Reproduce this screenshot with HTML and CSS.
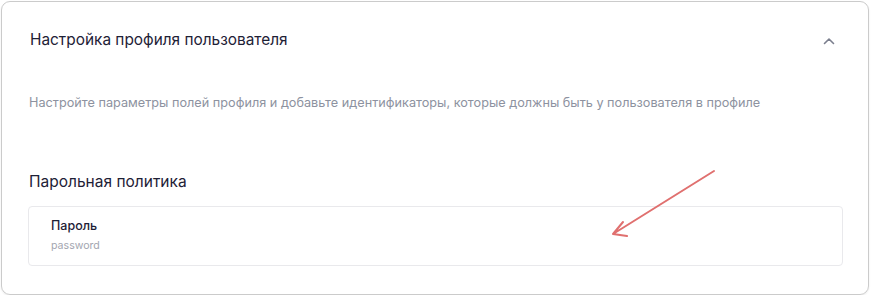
FILE: index.html
```html
<!DOCTYPE html>
<html lang="ru">
<head>
<meta charset="utf-8">
<link rel="stylesheet" href="styles.css">
</head>
<body>
<div class="card">
  <div class="card-header">
    <h2 class="card-title">Настройка профиля пользователя</h2>
    <svg class="chevron" width="12" height="8" viewBox="0 0 12 8"><path d="M1.5 6.5 L6 2 L10.5 6.5" fill="none" stroke="#7b7f8e" stroke-width="1.6" stroke-linecap="round" stroke-linejoin="round"/></svg>
  </div>
  <p class="card-desc">Настройте параметры полей профиля и добавьте идентификаторы, которые должны быть у пользователя в профиле</p>
  <h3 class="section-title">Парольная политика</h3>
  <div class="field-box">
    <div class="field-name">Пароль</div>
    <div class="field-key">password</div>
  </div>
  <svg class="arrow" width="871" height="296" viewBox="0 0 871 296"><path d="M714 171 L613 234 M613 234 L623 222 M613 234 L627 236" fill="none" stroke="#e0706f" stroke-width="2" stroke-linecap="round" stroke-linejoin="round"/></svg>
</div>
</body>
</html>
```
FILE: styles.css
```css
html, body { margin: 0; padding: 0; background: #ffffff; }
body { font-family: Inter, "Noto Sans", sans-serif; }
.card {
  box-sizing: border-box;
  margin: 1px 0 0 1px;
  width: 868px;
  height: 294px;
  border: 1px solid #cbcbcb;
  border-radius: 9px;
  padding: 0 25px 0 26px;
  box-shadow: 0 1px 2px rgba(0,0,0,0.08);
}
.card-header {
  display: flex;
  align-items: center;
  justify-content: space-between;
  height: 74px;
  padding-left: 2px;
}
.card-title {
  margin: 0;
  font-size: 15.4px;
  font-weight: 400;
  color: #1e2136;
}
.chevron { margin-right: 8px; margin-top: 3px; }
.card-desc {
  margin: 18px 0 0 1px;
  font-size: 12.7px;
  line-height: 18px;
  color: #8d92a0;
}
.section-title {
  margin: 60px 0 0 1px;
  font-size: 15.5px;
  line-height: 20px;
  font-weight: 400;
  color: #1e2136;
}
.field-box {
  margin-top: 14px;
  height: 60px;
  box-sizing: border-box;
  border: 1px solid #e9e9ec;
  border-radius: 4px;
  padding: 10px 22px;
}
.field-name {
  font-size: 12.5px;
  line-height: 17px;
  font-weight: 500;
  color: #1e2136;
}
.field-key {
  margin-top: 5px;
  font-size: 10.6px;
  line-height: 14px;
  color: #a3a6b0;
}
.arrow { position: absolute; left: 0; top: 0; pointer-events: none; }
```
